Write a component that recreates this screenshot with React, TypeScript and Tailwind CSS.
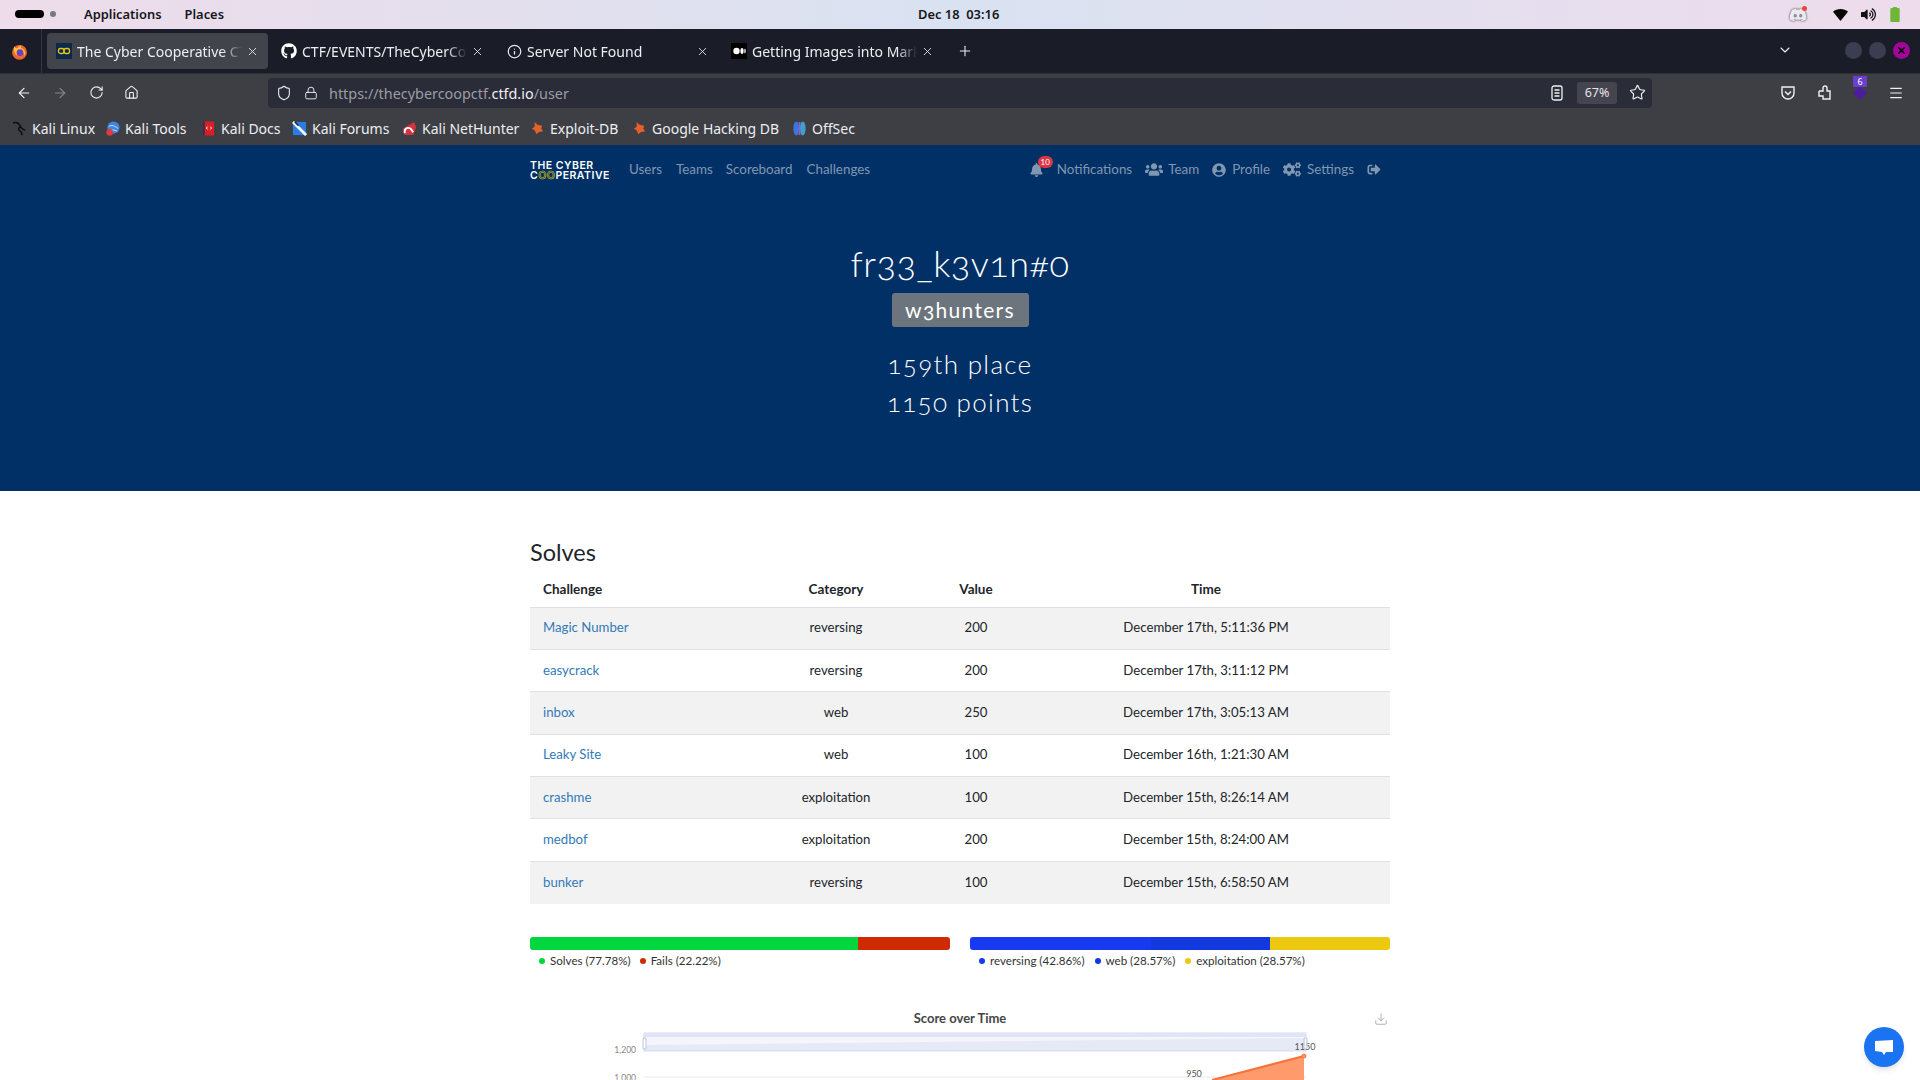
import { ArrowLeft, ArrowRight, RotateCw, Home, Shield, Lock, Star, Menu, X, Plus, ChevronDown, Info, Download } from 'lucide-react';
import { FaBell, FaUsers, FaUserCircle, FaCogs, FaSignOutAlt, FaGithub, FaVolumeUp, FaDiscord } from 'react-icons/fa';

// browser chrome data
const tabs = [
  { title: 'The Cyber Cooperative CTF', icon: 'ctf', active: true },
  { title: 'CTF/EVENTS/TheCyberCoop', icon: 'gh', active: false },
  { title: 'Server Not Found', icon: 'info', active: false },
  { title: 'Getting Images into Markdown', icon: 'medium', active: false },
];

const bookmarks = [
  { name: 'Kali Linux', icon: 'kali', w: 'w-[93px]' },
  { name: 'Kali Tools', icon: 'tools', w: 'w-[96px]' },
  { name: 'Kali Docs', icon: 'docs', w: 'w-[91px]' },
  { name: 'Kali Forums', icon: 'forums', w: 'w-[110px]' },
  { name: 'Kali NetHunter', icon: 'net', w: 'w-[128px]' },
  { name: 'Exploit-DB', icon: 'exploit', w: 'w-[102px]' },
  { name: 'Google Hacking DB', icon: 'exploit', w: 'w-[160px]' },
  { name: 'OffSec', icon: 'offsec', w: 'w-[70px]' },
];

const solves = [
  ['Magic Number', 'reversing', '200', 'December 17th, 5:11:36 PM'],
  ['easycrack', 'reversing', '200', 'December 17th, 3:11:12 PM'],
  ['inbox', 'web', '250', 'December 17th, 3:05:13 AM'],
  ['Leaky Site', 'web', '100', 'December 16th, 1:21:30 AM'],
  ['crashme', 'exploitation', '100', 'December 15th, 8:26:14 AM'],
  ['medbof', 'exploitation', '200', 'December 15th, 8:24:00 AM'],
  ['bunker', 'reversing', '100', 'December 15th, 6:58:50 AM'],
];

const FirefoxIcon = () => (
  <svg viewBox="0 0 16 16" className="w-[17px] h-[17px] -ml-[2px]">
    <circle cx="8" cy="8.8" r="7" fill="#f2652b" />
    <path d="M3 3c1 2 2 2 3 2 1-2 3-3 4-3-1 1-1 2 0 3 3 1 4 4 3 7-1-3-3-4-5-4-2 0-3 2-2 4-2-1-4-5-3-9z" fill="#fdc13a" />
    <circle cx="8.5" cy="9" r="3.2" fill="#6b3fc9" />
  </svg>
);

const TabIcon = ({ kind }: { kind: string }) => {
  if (kind === 'gh') return <FaGithub className="w-4 h-4 text-white" />;
  if (kind === 'info') return <Info className="w-[15px] h-[15px] text-[#e8e8ea]" />;
  if (kind === 'medium')
    return (
      <svg viewBox="0 0 16 16" className="w-4 h-4">
        <rect width="16" height="16" fill="#000" />
        <circle cx="5.5" cy="8" r="3.2" fill="#fff" />
        <ellipse cx="11" cy="8" rx="1.6" ry="3" fill="#fff" />
        <ellipse cx="14" cy="8" rx="0.7" ry="2.6" fill="#fff" />
      </svg>
    );
  return (
    <svg viewBox="0 0 16 16" className="w-4 h-4">
      <rect width="16" height="16" fill="#0a2a4a" />
      <rect x="2.5" y="5.5" width="5.5" height="5" rx="2" fill="none" stroke="#e6c417" strokeWidth="1.3" />
      <rect x="8" y="5.5" width="5.5" height="5" rx="2" fill="none" stroke="#e6c417" strokeWidth="1.3" />
    </svg>
  );
};

const BookmarkIcon = ({ kind }: { kind: string }) => {
  switch (kind) {
    case 'kali':
      return (
        <svg viewBox="0 0 16 16" className="w-[15px] h-[15px]">
          <path d="M1 2c4-1 7 1 8 4 1 2 3 3 5 4M9 6c-2 1-3 3 0 5 1 1 2 3 1 4" fill="none" stroke="#0b0b0d" strokeWidth="1.5" />
        </svg>
      );
    case 'tools':
      return (
        <svg viewBox="0 0 16 16" className="w-[15px] h-[15px]">
          <circle cx="9" cy="7" r="6.5" fill="#3f86e0" />
          <path d="M4 6c3-2 6-1 10 2M6 10c3-1 5 0 7 1" stroke="#cfe2fa" fill="none" />
          <circle cx="5" cy="12" r="3.6" fill="#e03a3a" />
        </svg>
      );
    case 'docs':
      return (
        <svg viewBox="0 0 16 16" className="w-[15px] h-[15px]">
          <rect x="2" y="0.5" width="12" height="15" fill="#d81f26" />
          <rect x="2" y="0.5" width="2" height="15" fill="#2a3350" />
          <path d="M7 6L5.8 7.5 7 9M10 6l1.2 1.5L10 9" stroke="#fff" fill="none" />
        </svg>
      );
    case 'forums':
      return (
        <svg viewBox="0 0 16 16" className="w-[15px] h-[15px]">
          <rect x="1" y="1" width="14" height="14" fill="#2a7de1" />
          <path d="M1 1l14 14" stroke="#f2f4f8" strokeWidth="3" />
          <path d="M3 1l4 4" stroke="#14233d" strokeWidth="1.5" />
        </svg>
      );
    case 'net':
      return (
        <svg viewBox="0 0 16 16" className="w-[15px] h-[15px]">
          <path d="M1 8L13 1l2 6-3 8H3z" fill="#d9323f" />
          <path d="M3 13c-1-4 2-7 6-5l3 4" stroke="#fff" strokeWidth="2" fill="none" />
        </svg>
      );
    case 'exploit':
      return (
        <svg viewBox="0 0 16 16" className="w-[15px] h-[15px]">
          <path d="M5 1l3 3 5 1-1 3 2 3-5 1-2 2-2-4-3-2 3-2z" fill="#e4612a" />
        </svg>
      );
    default:
      return (
        <svg viewBox="0 0 16 16" className="w-[15px] h-[15px]">
          <ellipse cx="4.5" cy="8" rx="3" ry="7.5" fill="#3a78d8" />
          <ellipse cx="11.5" cy="8" rx="3" ry="7.5" fill="#3fa0d0" />
          <rect x="7" y="1" width="2" height="14" fill="#8b5fc9" />
        </svg>
      );
  }
};

const NavLink = ({ children, className }: { children: React.ReactNode; className?: string }) => (
  <span className={`text-[#8097b2] text-[13.4px] leading-none ${className ?? ''}`}>{children}</span>
);

const TopPanel = () => (
  <div className="h-[29px] flex items-center justify-between bg-gradient-to-r from-[#eedcea] via-[#d9e2f1] to-[#eedcec] pl-[15px] pr-[20px] relative text-[#16171c] font-semibold text-[12.9px] [font-family:'Noto_Sans',sans-serif]">
    <div className="flex items-center">
      <span className="w-[29px] h-[8px] bg-black rounded-full" />
      <span className="w-[6px] h-[6px] bg-[#77777f] rounded-full ml-[6px]" />
      <span className="ml-[28px]">Applications</span>
      <span className="ml-[23px]">Places</span>
    </div>
    <span className="absolute left-[918px] top-[6px] leading-[17px]">Dec 18&nbsp;&nbsp;03:16</span>
    <div className="flex items-center">
      <span className="relative mr-[26px]">
        <FaDiscord className="w-[18px] h-[16px] text-[#e9e9ee] [filter:drop-shadow(0_0_1px_#333)]" />
        <span className="absolute -top-[1px] right-0 w-[5px] h-[5px] rounded-full bg-[#e8483c]" />
      </span>
      <svg viewBox="0 0 16 16" className="w-[15px] h-[15px] mr-[13px]">
        <path d="M0 5c4-4 12-4 16 0L8 15z" fill="#050505" />
      </svg>
      <FaVolumeUp className="w-[15px] h-[15px] text-[#111] mr-[14px]" />
      <svg viewBox="0 0 10 16" className="w-[10px] h-[15px]">
        <rect x="0" y="1" width="10" height="15" rx="1" fill="#6fb536" />
        <rect x="3" y="0" width="4" height="2" fill="#6fb536" />
      </svg>
    </div>
  </div>
);

const TabBar = () => (
  <div className="h-[44px] bg-[#1a1d27] flex items-center relative [font-family:'Noto_Sans',sans-serif] text-[14px] text-[#eceef2]">
    <div className="w-[42px] h-full flex items-center justify-center border-r border-[#34363f] shrink-0">
      <FirefoxIcon />
    </div>
    <div className="flex items-center pl-[5px]">
      {tabs.map((t) => (
        <div
          key={t.title}
          className={`h-[36px] flex items-center rounded-[4px] pl-[10px] pr-[9px] w-[221px] mr-[4px] ${t.active ? 'bg-[#42444c]' : ''}`}
        >
          <span className="w-4 h-4 flex items-center justify-center shrink-0 mr-[5px] -ml-[1px]"><TabIcon kind={t.icon} /></span>
          <span className="flex-1 whitespace-nowrap overflow-hidden [mask-image:linear-gradient(to_right,black_88%,transparent)]">{t.title}</span>
          <X className="w-[13px] h-[13px] ml-[4px] shrink-0" strokeWidth={1.6} />
        </div>
      ))}
      <Plus className="w-4 h-4 ml-[10px]" strokeWidth={1.6} />
    </div>
    <ChevronDown className="absolute left-[1777px] top-[13px] w-4 h-4" strokeWidth={1.6} />
    <div className="absolute left-[1845px] top-[13px] flex gap-[7px]">
      <span className="w-[17px] h-[17px] rounded-full bg-[#3a3e50]" />
      <span className="w-[17px] h-[17px] rounded-full bg-[#3a3e50]" />
      <span className="w-[17px] h-[17px] rounded-full bg-[#a2059a] flex items-center justify-center">
        <X className="w-[11px] h-[11px] text-black" strokeWidth={3.5} />
      </span>
    </div>
  </div>
);

const Toolbar = () => (
  <div className="h-[72px] bg-[#3e3f45] [font-family:'Noto_Sans',sans-serif] border-t border-[#2f3036]">
    <div className="h-[37px] flex items-center text-[#f1f1f3]">
      <ArrowLeft className="w-4 h-4 ml-[16px]" strokeWidth={1.7} />
      <ArrowRight className="w-4 h-4 ml-[20px] text-[#85868b]" strokeWidth={1.7} />
      <RotateCw className="w-[15px] h-[15px] ml-[21px]" strokeWidth={1.7} />
      <Home className="w-[15px] h-[15px] ml-[20px]" strokeWidth={1.7} />
      <div className="absolute left-[268px] top-[78px] w-[1384px] h-[30px] bg-[#2a2c38] rounded-[4px] flex items-center pl-[8px] text-[14.4px]">
        <Shield className="w-4 h-4" strokeWidth={1.6} />
        <Lock className="w-[14px] h-[14px] ml-[12px]" strokeWidth={1.6} />
        <span className="ml-[11px] text-[#9c9da6] relative top-[1px]">
          https://thecybercoopctf.<span className="text-[#f1f1f3]">ctfd.io</span>/user
        </span>
        <svg viewBox="0 0 14 16" className="absolute left-[1282px] top-[7px] w-[14px] h-4" fill="none" stroke="currentColor" strokeWidth="1.3">
          <rect x="2" y="1" width="10" height="14" rx="2" />
          <path d="M4.5 5h5M4.5 8h5M4.5 11h5" />
        </svg>
        <span className="absolute left-[1309px] top-[4px] w-[40px] h-[22px] rounded-[3px] bg-[#44454e] text-[12.5px] flex items-center justify-center text-[#e4e4e8]">67%</span>
        <Star className="absolute left-[1361px] top-[6px] w-[17px] h-[17px]" strokeWidth={1.6} />
      </div>
      <div className="absolute left-[1780px] top-[85px] flex items-center">
        <svg viewBox="0 0 16 16" className="w-4 h-4" fill="none" stroke="currentColor" strokeWidth="1.4">
          <path d="M2 2h12v6a6 6 0 0 1-12 0z" />
          <path d="M5 6.5l3 3 3-3" />
        </svg>
        <svg viewBox="0 0 16 16" className="w-4 h-4 ml-[21px]" fill="none" stroke="currentColor" strokeWidth="1.4">
          <path d="M2 6h4V3a2 2 0 0 1 4 0v3h3v8H6v-3H4" />
          <path d="M2 6v5h2" />
        </svg>
        <span className="relative ml-[19px] w-4 h-4">
          <svg viewBox="0 0 16 16" className="w-4 h-4"><path d="M8 1l7 7-7 7-7-7z" fill="#4b1ea0" /></svg>
          <span className="absolute -top-[9px] left-[1px] w-[14px] h-[11px] bg-[#6a3fd0] text-white text-[9px] leading-[11px] text-center">6</span>
        </span>
        <Menu className="w-4 h-4 ml-[20px]" strokeWidth={1.7} />
      </div>
    </div>
    <div className="h-[34px] flex items-center pl-[12px] text-[14px] text-[#eceef0]">
      {bookmarks.map((b) => (
        <div key={b.name} className={`flex items-center ${b.w} shrink-0`}>
          <BookmarkIcon kind={b.icon} />
          <span className="ml-[5px] whitespace-nowrap">{b.name}</span>
        </div>
      ))}
    </div>
  </div>
);

const Hero = () => (
  <div className="h-[346px] bg-[#003066] text-white [font-family:Lato,sans-serif]">
    <div className="w-[860px] mx-auto h-[49px] flex items-center relative">
      <div className="mt-[2px] font-semibold text-[10.5px] leading-[10px] tracking-[0.5px] [font-family:Inter,sans-serif] w-[79px] whitespace-nowrap">
        <div>THE CYBER</div>
        <div>C<span className="text-transparent [-webkit-text-stroke:0.6px_#d9c400]">OO</span>PERATIVE</div>
      </div>
      <NavLink className="ml-[20px]">Users</NavLink>
      <NavLink className="ml-[14px]">Teams</NavLink>
      <NavLink className="ml-[13px]">Scoreboard</NavLink>
      <NavLink className="ml-[14px]">Challenges</NavLink>
      <div className="ml-auto flex items-center pr-[9px]">
        <span className="relative">
          <FaBell className="w-[13px] h-[14px] text-[#8097b2]" />
          <span className="absolute -top-[7px] left-[8px] w-[15px] h-[12px] rounded-full bg-[#dc3545] text-white text-[8px] leading-[12px] text-center">10</span>
        </span>
        <NavLink className="ml-[14px]">Notifications</NavLink>
        <FaUsers className="w-[18px] h-[15px] text-[#8097b2] ml-[13px]" />
        <NavLink className="ml-[5px]">Team</NavLink>
        <FaUserCircle className="w-[14px] h-[14px] text-[#8097b2] ml-[13px]" />
        <NavLink className="ml-[6px]">Profile</NavLink>
        <FaCogs className="w-[18px] h-[15px] text-[#8097b2] ml-[13px]" />
        <NavLink className="ml-[6px]">Settings</NavLink>
        <FaSignOutAlt className="w-[14px] h-[13px] text-[#8097b2] ml-[13px]" />
      </div>
    </div>
    <div className="flex flex-col items-center">
      <h1 className="mt-[46px] text-[36px] leading-[46px] font-light tracking-[0.5px] oldstyle-nums">fr33_k3v1n#0</h1>
      <span className="mt-[7px] h-[34px] w-[137px] flex items-center justify-center rounded-[3px] bg-[#6c757d] text-[21px] tracking-[1.3px] oldstyle-nums">w3hunters</span>
      <div className="mt-[18px] text-[26px] leading-[38px] font-light tracking-[1.3px] text-center oldstyle-nums">
        <div>159th place</div>
        <div>1150 points</div>
      </div>
    </div>
  </div>
);

const SolvesTable = () => (
  <table className="w-[860px] table-fixed text-[13.2px] text-[#212529] border-collapse">
    <thead>
      <tr className="h-[35px] font-bold text-[13.5px]">
        <th className="w-[212px] text-left pl-[13px] font-bold">Challenge</th>
        <th className="w-[188px] text-center font-bold">Category</th>
        <th className="w-[92px] text-center font-bold">Value</th>
        <th className="text-center font-bold">Time</th>
      </tr>
    </thead>
    <tbody>
      {solves.map((r, i) => (
        <tr key={r[0]} className={`h-[42.4px] border-t border-[#dee2e6] ${i % 2 === 0 ? 'bg-[#f2f2f2]' : 'bg-white'}`}>
          <td className="pl-[13px] text-[#337ab7]">{r[0]}</td>
          <td className="text-center">{r[1]}</td>
          <td className="text-center">{r[2]}</td>
          <td className="text-center">{r[3]}</td>
        </tr>
      ))}
    </tbody>
  </table>
);

const Legend = ({ color, label }: { color: string; label: string }) => (
  <span className="flex items-center gap-[5px]">
    <span className={`w-[6px] h-[6px] rounded-full ${color}`} />
    {label}
  </span>
);

const PercentBars = () => (
  <div className="flex gap-[20px] mt-[33px] text-[11.6px] text-[#333]">
    <div className="w-[420px]">
      <div className="flex h-[13px] rounded-[3px] overflow-hidden">
        <div className="w-[78%] bg-[#00d63e]" />
        <div className="flex-1 bg-[#cf2a00]" />
      </div>
      <div className="flex gap-[9px] pl-[9px] mt-[3px] leading-[16px]">
        <Legend color="bg-[#00d63e]" label="Solves (77.78%)" />
        <Legend color="bg-[#cf2a00]" label="Fails (22.22%)" />
      </div>
    </div>
    <div className="w-[420px]">
      <div className="flex h-[13px] rounded-[3px] overflow-hidden">
        <div className="w-[43%] bg-[#1739f0]" />
        <div className="w-[28.5%] bg-[#1238e0]" />
        <div className="flex-1 bg-[#edc811]" />
      </div>
      <div className="flex gap-[10px] pl-[9px] mt-[3px] leading-[16px]">
        <Legend color="bg-[#1739f0]" label="reversing (42.86%)" />
        <Legend color="bg-[#1238e0]" label="web (28.57%)" />
        <Legend color="bg-[#edc811]" label="exploitation (28.57%)" />
      </div>
    </div>
  </div>
);

const ScoreChart = () => (
  <div className="mt-[40px] relative">
    <div className="text-center text-[13px] font-bold text-[#464646] leading-[18px]">Score over Time</div>
    <Download className="absolute right-[2px] top-[3px] w-[14px] h-[14px] text-[#9a9a9a]" strokeWidth={1.3} />
    <svg width="860" height="70" className="block">
      <rect x="114" y="6" width="662" height="18" fill="#e6eaf6" stroke="#d2dbee" />
      <rect x="114" y="6" width="662" height="4" fill="#dfe5f4" />
      <path d="M116 24 L116 18 L776 11 L776 10 L116 10 Z" fill="#f4f6fb" />
      <line x1="114" y1="50" x2="776" y2="50" stroke="#e8e8ea" />
      <path d="M682 53 L774 29 L774 53 Z" fill="#fe9a6c" />
      <path d="M682 53 L774 29" stroke="#f5733a" strokeWidth="2" />
      <circle cx="774" cy="29" r="2" fill="#fe9a6c" stroke="#f5733a" />
      <text x="106" y="26" textAnchor="end" fontSize="8.5" fill="#888" fontFamily="Lato, sans-serif">1,200</text>
      <text x="106" y="54" textAnchor="end" fontSize="8.5" fill="#888" fontFamily="Lato, sans-serif">1,000</text>
      <text x="664" y="50" textAnchor="middle" fontSize="9" fill="#555" fontFamily="Lato, sans-serif">950</text>
      <text x="775" y="23" textAnchor="middle" fontSize="9" fill="#555" fontFamily="Lato, sans-serif">1150</text>
      <rect x="113" y="11" width="3" height="11" rx="1" fill="#fff" stroke="#b9c4dd" />
      <rect x="774" y="11" width="3" height="11" rx="1" fill="#fff" fillOpacity="0.7" stroke="#b9c4dd" />
    </svg>
  </div>
);

export default function App() {
  return (
    <div className="h-[1080px] overflow-hidden relative bg-white [font-family:Lato,sans-serif]">
      <TopPanel />
      <TabBar />
      <Toolbar />
      <Hero />
      <div className="w-[860px] mx-auto">
        <h2 className="mt-[46px] text-[23.5px] leading-[30px] font-normal text-[#212529]">Solves</h2>
        <div className="mt-[5px]"><SolvesTable /></div>
        <PercentBars />
        <ScoreChart />
      </div>
      {/* chat button floats over the page */}
      <div className="absolute left-[1864px] top-[1027px] w-[40px] h-[40px] rounded-full bg-[#1a73f0] flex items-center justify-center shadow-md">
        <svg viewBox="0 0 20 20" className="w-[20px] h-[20px]">
          <path d="M1 4l18-1v12h-7l-2 3-2-3-7-1z" fill="#fff" />
        </svg>
      </div>
    </div>
  );
}
